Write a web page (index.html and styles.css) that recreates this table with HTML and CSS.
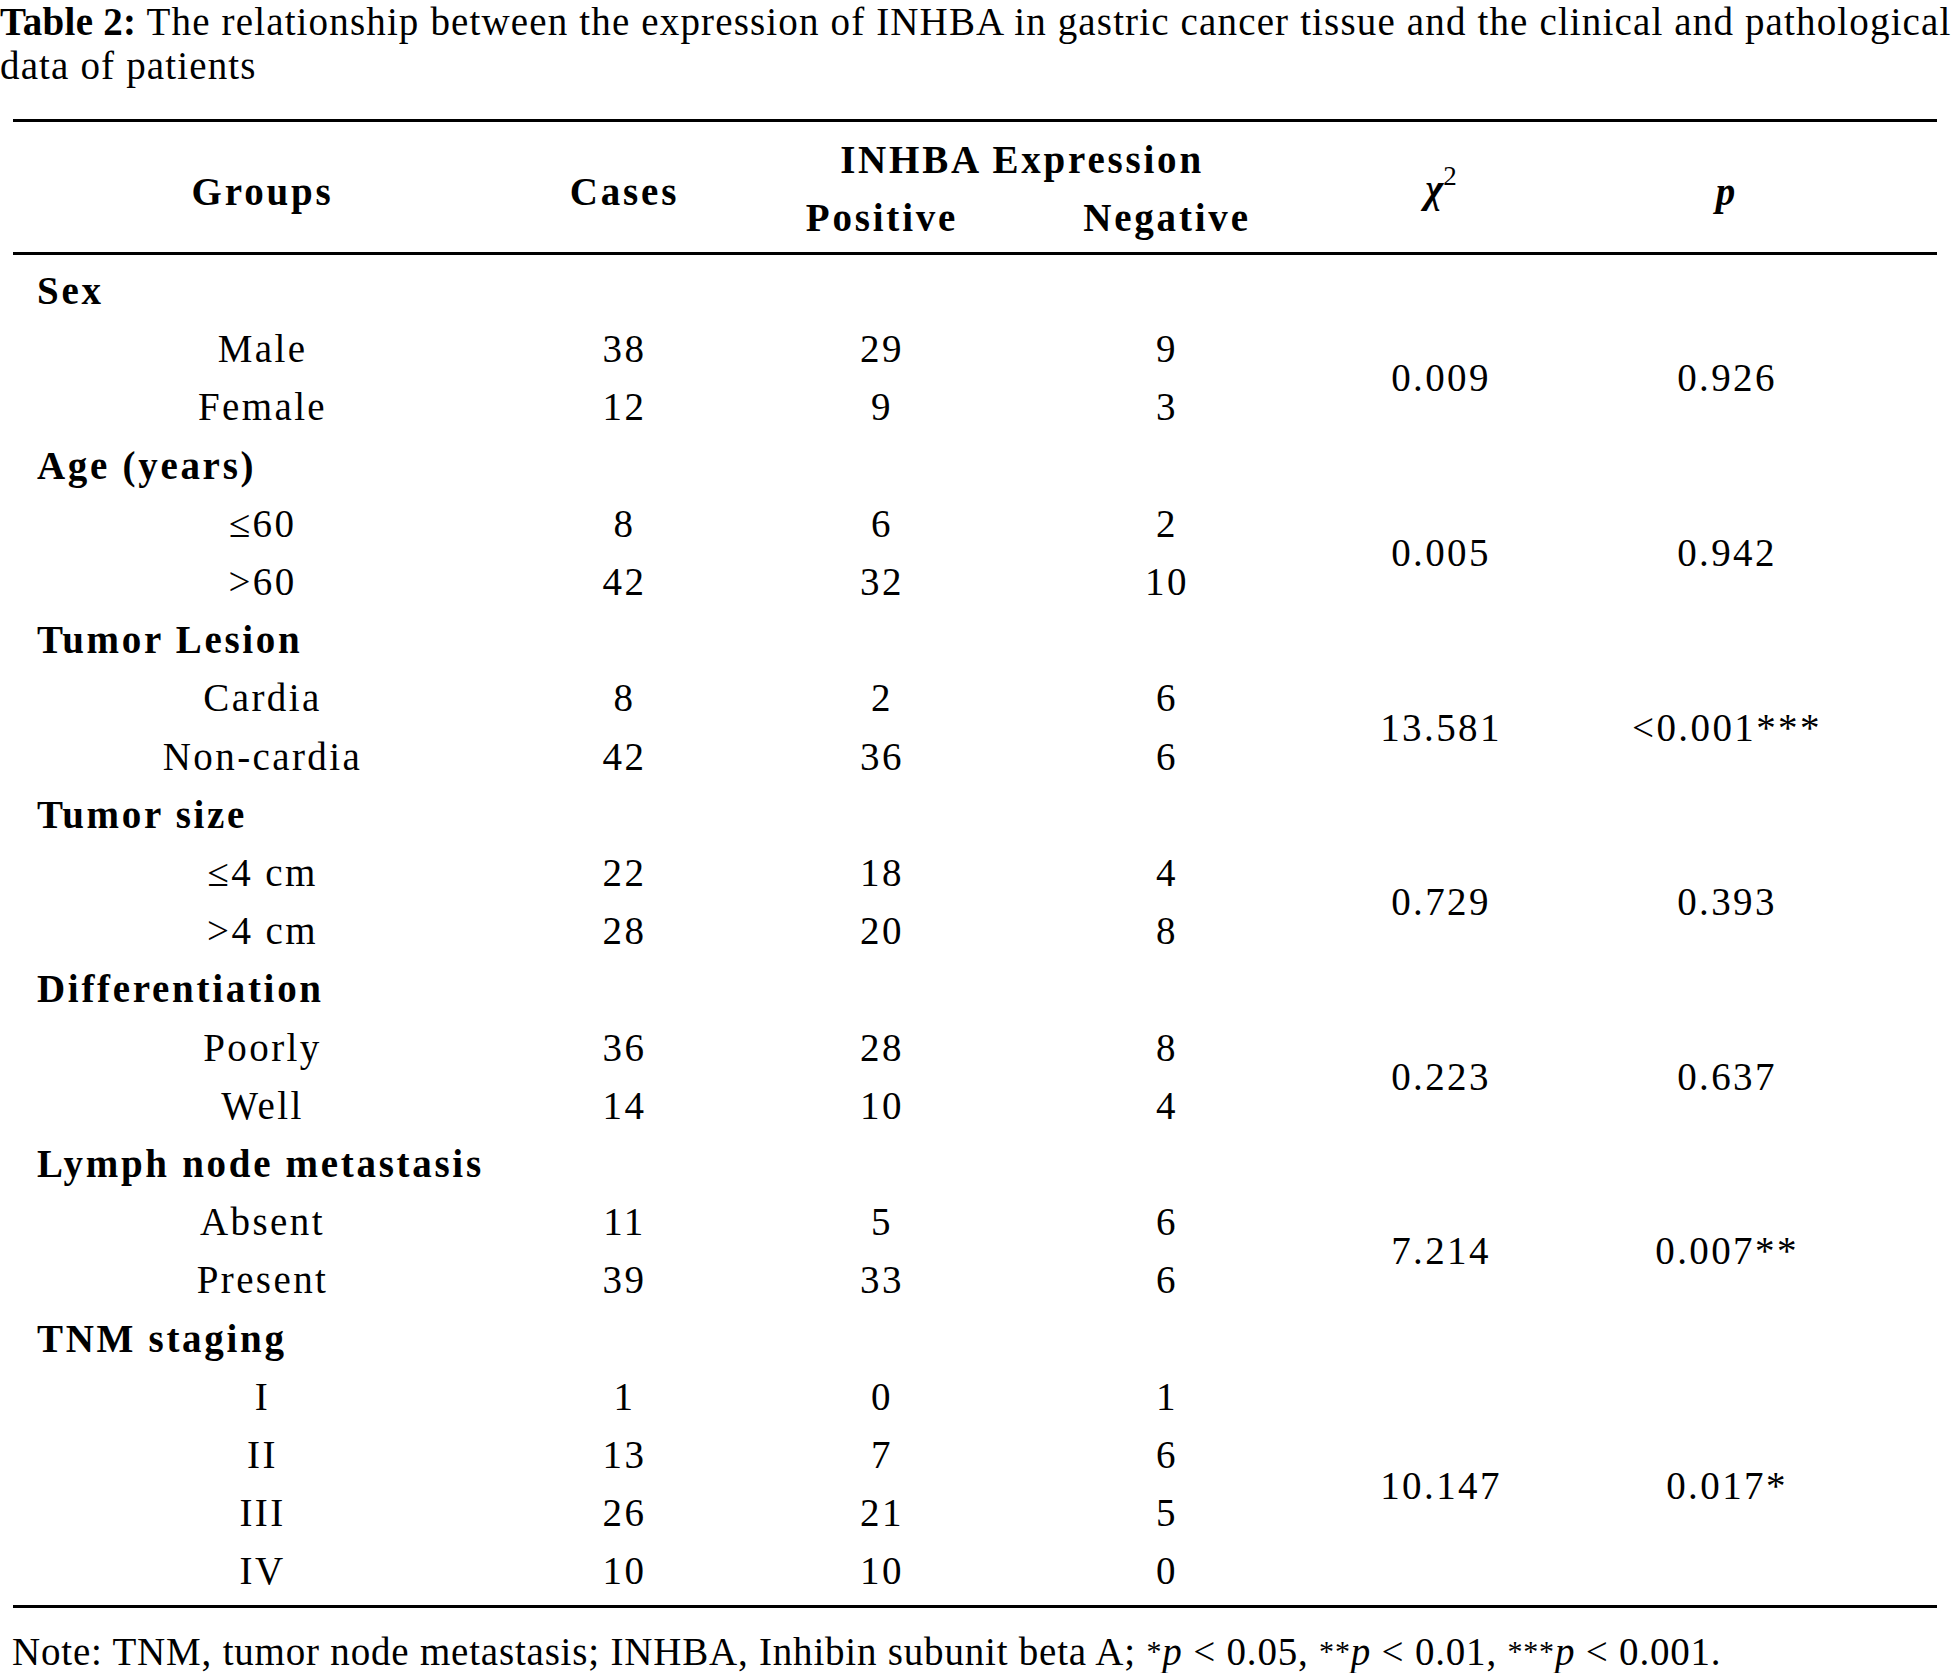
FILE: index.html
```html
<!DOCTYPE html>
<html lang="en">
<head>
<meta charset="utf-8">
<title>Table 2</title>
<link rel="stylesheet" href="styles.css">
</head>
<body>
<div class="page">
  <p class="caption"><b class="cap-label">Table 2:</b> The relationship between the expression of INHBA in gastric cancer tissue and the clinical and pathological<br>data of patients</p>
  <table class="tbl">
    <colgroup>
      <col class="w1"><col class="w2"><col class="w3"><col class="w4"><col class="w5"><col class="w6">
    </colgroup>
    <thead>
      <tr class="h1">
        <th rowspan="2">Groups</th>
        <th rowspan="2">Cases</th>
        <th colspan="2">INHBA Expression</th>
        <th rowspan="2" class="chi"><i>χ</i><sup>2</sup></th>
        <th rowspan="2" class="pcol"><i>p</i></th>
      </tr>
      <tr class="h2">
        <th>Positive</th>
        <th>Negative</th>
      </tr>
    </thead>
    <tbody>
      <tr class="grp first"><td colspan="6">Sex</td></tr>
      <tr><td>Male</td><td>38</td><td>29</td><td>9</td><td rowspan="2">0.009</td><td rowspan="2" class="pcol">0.926</td></tr>
      <tr><td>Female</td><td>12</td><td>9</td><td>3</td></tr>
      <tr class="grp"><td colspan="6">Age (years)</td></tr>
      <tr><td>≤60</td><td>8</td><td>6</td><td>2</td><td rowspan="2">0.005</td><td rowspan="2" class="pcol">0.942</td></tr>
      <tr><td>&gt;60</td><td>42</td><td>32</td><td>10</td></tr>
      <tr class="grp"><td colspan="6">Tumor Lesion</td></tr>
      <tr><td>Cardia</td><td>8</td><td>2</td><td>6</td><td rowspan="2">13.581</td><td rowspan="2" class="pcol">&lt;0.001***</td></tr>
      <tr><td>Non-cardia</td><td>42</td><td>36</td><td>6</td></tr>
      <tr class="grp"><td colspan="6">Tumor size</td></tr>
      <tr><td>≤4 cm</td><td>22</td><td>18</td><td>4</td><td rowspan="2">0.729</td><td rowspan="2" class="pcol">0.393</td></tr>
      <tr><td>&gt;4 cm</td><td>28</td><td>20</td><td>8</td></tr>
      <tr class="grp"><td colspan="6">Differentiation</td></tr>
      <tr><td>Poorly</td><td>36</td><td>28</td><td>8</td><td rowspan="2">0.223</td><td rowspan="2" class="pcol">0.637</td></tr>
      <tr><td>Well</td><td>14</td><td>10</td><td>4</td></tr>
      <tr class="grp"><td colspan="6">Lymph node metastasis</td></tr>
      <tr><td>Absent</td><td>11</td><td>5</td><td>6</td><td rowspan="2">7.214</td><td rowspan="2" class="pcol">0.007**</td></tr>
      <tr><td>Present</td><td>39</td><td>33</td><td>6</td></tr>
      <tr class="grp"><td colspan="6">TNM staging</td></tr>
      <tr><td>I</td><td>1</td><td>0</td><td>1</td><td rowspan="4">10.147</td><td rowspan="4" class="pcol">0.017*</td></tr>
      <tr><td>II</td><td>13</td><td>7</td><td>6</td></tr>
      <tr><td>III</td><td>26</td><td>21</td><td>5</td></tr>
      <tr class="last"><td>IV</td><td>10</td><td>10</td><td>0</td></tr>
    </tbody>
  </table>
  <p class="note">Note: TNM, tumor node metastasis; INHBA, Inhibin subunit beta A; <sup class="ast">*</sup><i>p</i> &lt; 0.05, <sup class="ast">**</sup><i>p</i> &lt; 0.01, <sup class="ast">***</sup><i>p</i> &lt; 0.001.</p>
</div>
</body>
</html>
```
FILE: styles.css
```css
html, body {
  margin: 0;
  padding: 0;
  background: #ffffff;
}

body {
  font-family: "Liberation Serif", "Times New Roman", serif;
  color: #000000;
  font-size: 39px;
  letter-spacing: 0.8px;
}

.page {
  width: 1951px;
}

.caption {
  margin: 0;
  line-height: 44px;
  letter-spacing: 1.15px;
  white-space: nowrap;
}

.cap-label {
  letter-spacing: 0.3px;
}

.tbl {
  margin: 31px 0 0 13px;
  width: 1924px;
  border-collapse: collapse;
  table-layout: fixed;
  border-top: 3px solid #000;
  border-bottom: 3px solid #000;
}

.w1 { width: 499px; }
.w2 { width: 225px; }
.w3 { width: 290px; }
.w4 { width: 280px; }
.w5 { width: 268px; }
.w6 { width: 362px; }

.tbl thead {
  border-bottom: 3px solid #000;
}

.tbl th {
  font-weight: bold;
  text-align: center;
  vertical-align: middle;
  padding: 0;
  line-height: 58px;
  letter-spacing: 2.8px;
}

.tbl .h1 th {
  padding-top: 9px;
}

.tbl .h2 th {
  padding-bottom: 5px;
}

.tbl th.chi {
  letter-spacing: 0;
  padding-top: 4px;
}

.tbl th sup {
  font-size: 27px;
  line-height: 0;
  vertical-align: 17px;
  font-weight: normal;
}

.tbl td {
  text-align: center;
  vertical-align: middle;
  padding: 0;
  line-height: 58.2px;
  letter-spacing: 2.4px;
  white-space: nowrap;
}

.tbl .pcol {
  padding-right: 58px;
}

.tbl .grp td {
  text-align: left;
  font-weight: bold;
  letter-spacing: 2.7px;
  padding-left: 24px;
}

.tbl .first td {
  padding-top: 7px;
}

.tbl .last td {
  padding-bottom: 4px;
}

.note {
  margin: 15px 0 0 12px;
  line-height: 58px;
  white-space: nowrap;
}

.ast {
  font-size: 30px;
  line-height: 0;
  vertical-align: 4px;
}
```
